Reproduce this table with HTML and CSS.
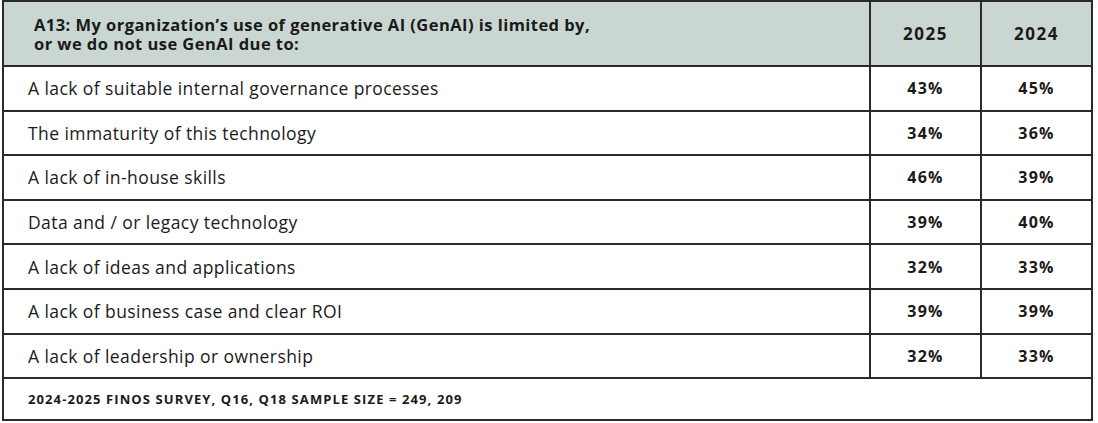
FILE: index.html
```html
<!DOCTYPE html>
<html>
<head>
<meta charset="utf-8">
<link rel="stylesheet" href="styles.css">
</head>
<body>
<table class="survey">
  <thead>
    <tr class="head">
      <th class="q"><span class="qline">A13: My organization’s use of generative AI (GenAI) is limited by,</span><span class="qline">or we do not use GenAI due to:</span></th>
      <th class="yr">2025</th>
      <th class="yr">2024</th>
    </tr>
  </thead>
  <tbody>
    <tr><td class="label">A lack of suitable internal governance processes</td><td class="val">43%</td><td class="val">45%</td></tr>
    <tr><td class="label">The immaturity of this technology</td><td class="val">34%</td><td class="val">36%</td></tr>
    <tr><td class="label">A lack of in-house skills</td><td class="val">46%</td><td class="val">39%</td></tr>
    <tr><td class="label">Data and / or legacy technology</td><td class="val">39%</td><td class="val">40%</td></tr>
    <tr><td class="label">A lack of ideas and applications</td><td class="val">32%</td><td class="val">33%</td></tr>
    <tr><td class="label">A lack of business case and clear ROI</td><td class="val">39%</td><td class="val">39%</td></tr>
    <tr><td class="label">A lack of leadership or ownership</td><td class="val">32%</td><td class="val">33%</td></tr>
    <tr class="foot"><td colspan="3">2024-2025 FINOS SURVEY, Q16, Q18 SAMPLE SIZE = 249, 209</td></tr>
  </tbody>
</table>
</body>
</html>
```
FILE: styles.css
```css
html, body {
  margin: 0;
  padding: 0;
  background: #ffffff;
}
body {
  padding: 0 5px 0 2px;
  font-family: "Open Sans", "Noto Sans", sans-serif;
  color: #1a1a1a;
}
.survey {
  width: 1091px;
  border-collapse: collapse;
  border: 2px solid #2a2a2a;
  table-layout: fixed;
}
.survey td, .survey th {
  border: 2px solid #2a2a2a;
  padding: 0;
}
.head th {
  background: #cad6d1;
  height: 63px;
  font-weight: 700;
}
.head .q {
  text-align: left;
  padding-left: 30px;
  font-size: 16.5px;
  letter-spacing: 0.45px;
  line-height: 19px;
}
.qline {
  display: block;
}
.head .yr {
  width: 109px;
  font-size: 17px;
  letter-spacing: 1.5px;
}
.label {
  height: 42.6px;
  padding-left: 24px !important;
  font-size: 17.5px;
  letter-spacing: 0.42px;
}
.val {
  text-align: center;
  font-weight: 700;
  font-size: 16px;
  letter-spacing: 1.3px;
}
.foot td {
  height: 40px;
  padding-left: 24px !important;
  font-size: 13px;
  letter-spacing: 1.1px;
  font-weight: 700;
}
```
